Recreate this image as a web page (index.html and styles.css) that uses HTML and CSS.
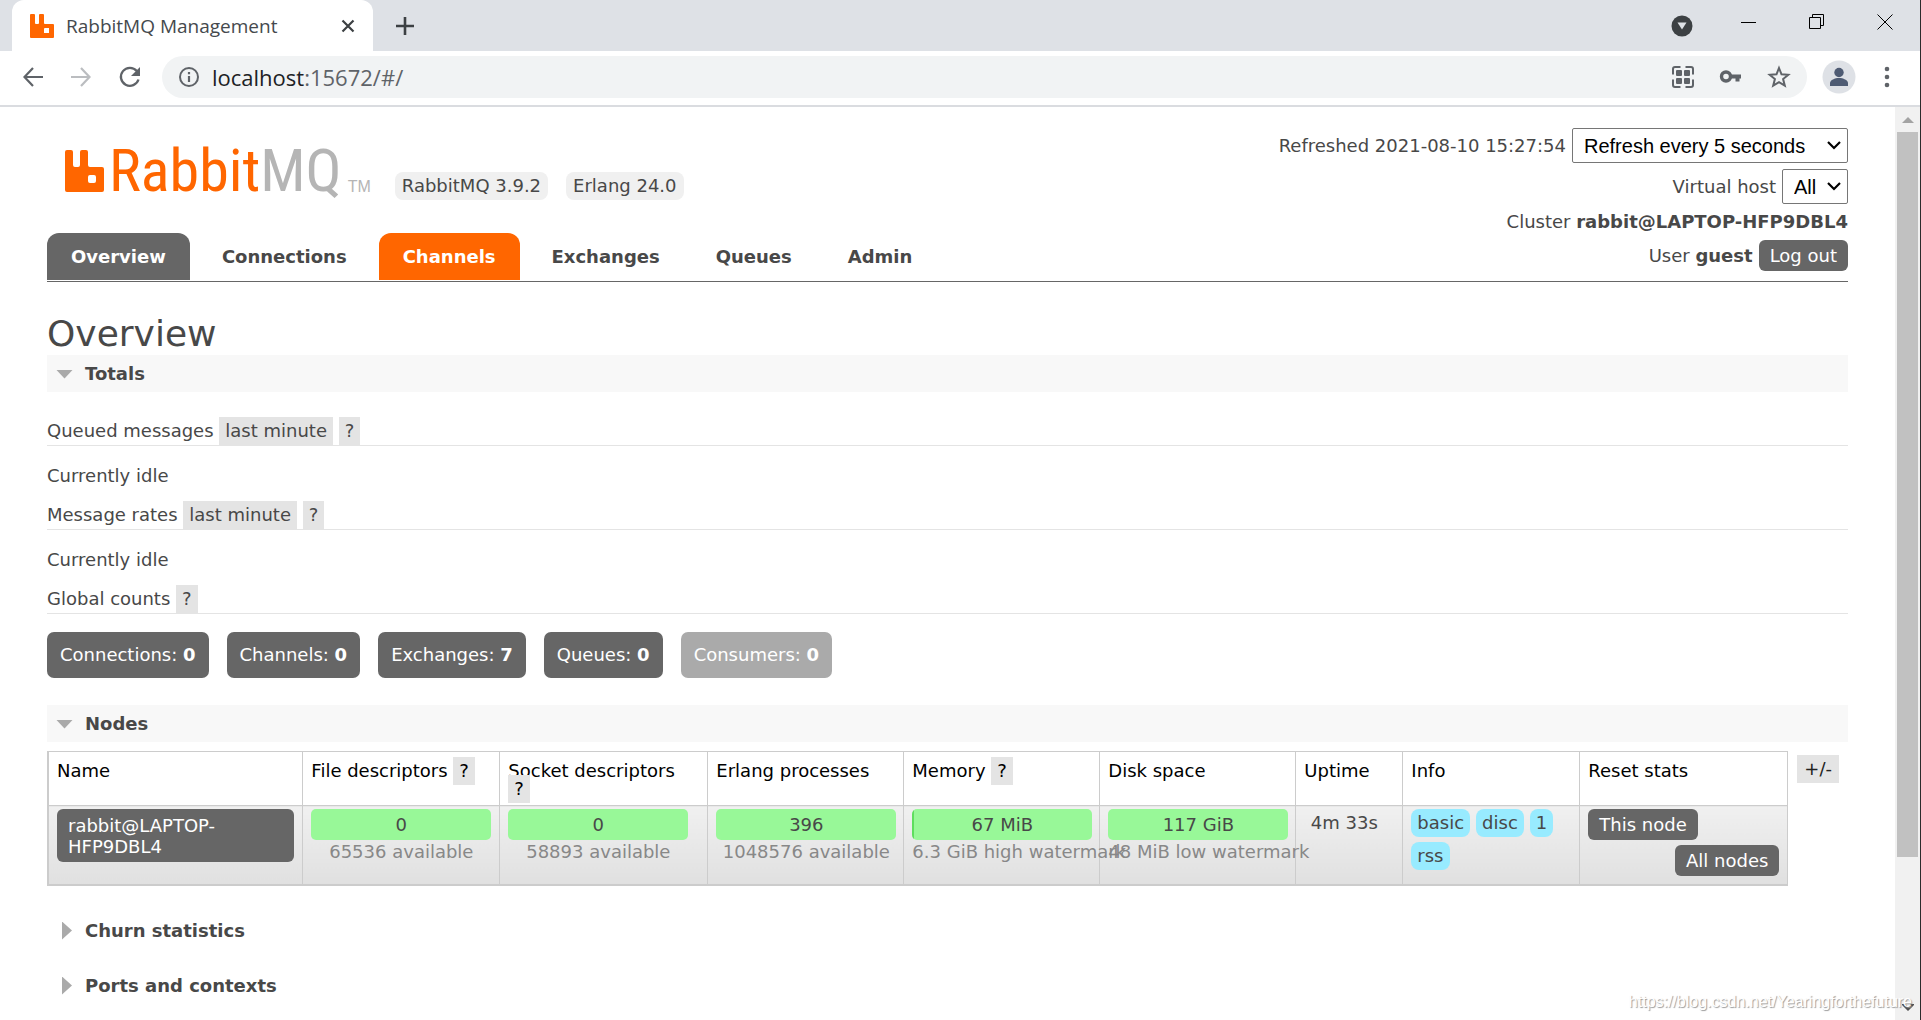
FILE: index.html
```html
<!DOCTYPE html>
<html lang="en">
<head>
<meta charset="utf-8">
<title>RabbitMQ Management</title>
<link rel="stylesheet" href="styles.css">
</head>
<body>
<div class="window">
  <div class="tabstrip">
    <div class="browser-tab">
      <svg class="favicon" width="24" height="24" viewBox="0 0 24 24"><path fill="#f60" fill-rule="evenodd" d="M1 0h3q1 0 1 1v8q0 1 1 1h2q1 0 1-1V1q0-1 1-1h3q1 0 1 1v8q0 1 1 1h8q1 0 1 1v12q0 1-1 1H1q-1 0-1-1V1q0-1 1-1zM14 15v4h5v-5h-4q-1 0-1 1z"/></svg>
      <span class="browser-title">RabbitMQ Management</span>
      <button class="icon-button" aria-label="Close tab"><svg width="14" height="14" viewBox="0 0 14 14"><path d="M1.500 1.500l11 11M12.500 1.500l-11 11" stroke="#3c4043" stroke-width="2.200"/></svg></button>
    </div>
    <button class="icon-button new-tab" aria-label="New tab"><svg width="20" height="20" viewBox="0 0 20 20"><path d="M10 1v18M1 10h18" stroke="#3c4043" stroke-width="2.600"/></svg></button>
    <div class="window-controls">
      <button class="icon-button tab-search" aria-label="Search tabs"><svg width="22" height="22" viewBox="0 0 22 22"><circle cx="11" cy="11" r="10.500" fill="#3c4043"/><path d="M6.500 7.500h9l-4.500 7z" fill="#dee1e6"/></svg></button>
      <button class="icon-button" aria-label="Minimize"><svg width="16" height="16" viewBox="0 0 16 16"><path d="M0 8.500h15" stroke="#000"/></svg></button>
      <button class="icon-button" aria-label="Restore"><svg width="16" height="16" viewBox="0 0 16 16"><path d="M.5 3.500h11v11H.5zM3.500 3V.5h11v11H12" fill="none" stroke="#000"/></svg></button>
      <button class="icon-button" aria-label="Close"><svg width="16" height="16" viewBox="0 0 16 16"><path d="M.5.5l15 15M15.500.5l-15 15" stroke="#000"/></svg></button>
    </div>
  </div>
  <div class="toolbar">
    <button class="icon-button" aria-label="Back"><svg width="20" height="20" viewBox="0 0 20 20"><path d="M20 10H2M10 1L1.500 10l8.500 9" fill="none" stroke="#5f6368" stroke-width="2.200"/></svg></button>
    <button class="icon-button" aria-label="Forward"><svg width="20" height="20" viewBox="0 0 20 20"><path d="M0 10h18M10 1l8.500 9-8.500 9" fill="none" stroke="#bbbdc0" stroke-width="2.200"/></svg></button>
    <button class="icon-button" aria-label="Reload"><svg width="22" height="22" viewBox="0 0 22 22"><path d="M17.800 5A9 9 0 1 0 19.500 13.500" fill="none" stroke="#5f6368" stroke-width="2.300"/><path d="M21 1v9h-9z" fill="#5f6368"/></svg></button>
    <div class="omnibox">
      <svg width="22" height="22" viewBox="0 0 22 22"><circle cx="11" cy="11" r="9" fill="none" stroke="#5f6368" stroke-width="2"/><path d="M11 10v6M11 6v2.200" stroke="#5f6368" stroke-width="2.200"/></svg>
      <span class="url">localhost<span class="url-rest">:15672/#/</span></span>
      <svg width="24" height="24" viewBox="0 0 24 24" fill="none" stroke="#5f6368" stroke-width="2"><path d="M9.500 2H4a2 2 0 0 0-2 2v5.500M14.500 2H20a2 2 0 0 1 2 2v5.500M9.500 22H4a2 2 0 0 1-2-2v-5.500M14.500 22H20a2 2 0 0 0 2-2v-5.500"/><g fill="#5f6368" stroke="none"><rect x="5" y="5" width="6" height="6" rx="1"/><rect x="13" y="5" width="6" height="6" rx="1"/><rect x="5" y="13" width="6" height="6" rx="1"/><rect x="13" y="13" width="6" height="6" rx="1"/></g></svg>
      <svg width="24" height="24" viewBox="0 0 24 24"><circle cx="7" cy="11.500" r="4.500" fill="none" stroke="#5f6368" stroke-width="3.400"/><path d="M11 9.500h11v4h-1.500v3h-4v-3H11z" fill="#5f6368"/></svg>
      <svg width="24" height="24" viewBox="0 0 24 24"><path d="M12 3l2.500 6.300 6.800.5-5.200 4.300 1.700 6.600-5.800-3.600-5.800 3.600 1.700-6.600L2.700 9.800l6.800-.5z" fill="none" stroke="#5f6368" stroke-width="2"/></svg>
    </div>
    <svg class="avatar" width="34" height="34" viewBox="0 0 34 34"><circle cx="17" cy="17" r="16.500" fill="#dee1e6"/><circle cx="17" cy="12.500" r="4.700" fill="#4e5b73"/><path d="M8 26v-3c0-3 5-5 9-5s9 2 9 5v3z" fill="#4e5b73"/></svg>
    <svg width="6" height="22" viewBox="0 0 6 22" fill="#5f6368"><circle cx="3" cy="3" r="2.300"/><circle cx="3" cy="11" r="2.300"/><circle cx="3" cy="19" r="2.300"/></svg>
  </div>
  <div class="viewport">
    <div class="page">
      <header class="masthead">
        <div class="brand-side">
          <div class="brand">
            <a class="logo" href="#" aria-label="RabbitMQ">
              <svg width="40" height="42" viewBox="0 0 40 42"><path fill="#f60" fill-rule="evenodd" d="M2 0h4q2 0 2 2v13q0 2 2 2h3q2 0 2-2V2q0-2 2-2h4q2 0 2 2v13q0 2 2 2h12q2 0 2 2v21q0 2-2 2H2q-2 0-2-2V2q0-2 2-2zM25 25q-2 0-2 2v4q0 2 2 2h4q2 0 2-2v-4q0-2-2-2z"/></svg>
              <span class="wordmark">Rabbit<span class="wordmark-mq">MQ</span></span><span class="trademark">TM</span>
            </a>
            <span class="version">RabbitMQ 3.9.2</span>
            <span class="version">Erlang 24.0</span>
          </div>
          <nav class="tabs">
            <a class="tab selected" href="#">Overview</a>
            <a class="tab" href="#">Connections</a>
            <a class="tab hovered" href="#">Channels</a>
            <a class="tab" href="#">Exchanges</a>
            <a class="tab" href="#">Queues</a>
            <a class="tab" href="#">Admin</a>
          </nav>
        </div>
        <div class="status">
          <div class="status-row"><label for="refresh">Refreshed 2021-08-10 15:27:54</label> <select id="refresh"><option selected>Refresh every 5 seconds</option><option>Refresh every 10 seconds</option><option>Refresh every 30 seconds</option></select></div>
          <div class="status-row"><label for="vhost">Virtual host</label> <select id="vhost"><option selected>All</option><option>/</option></select></div>
          <div class="status-row"><span>Cluster <b>rabbit@LAPTOP-HFP9DBL4</b></span></div>
          <div class="status-row"><span>User <b>guest</b></span> <button class="dark-button">Log out</button></div>
        </div>
      </header>
      <main>
        <h1>Overview</h1>
        <section>
          <h2 class="bar open">Totals</h2>
          <div class="totals">
            <h3>Queued messages <a class="chip" href="#">last minute</a> <a class="chip" href="#">?</a></h3>
            <p>Currently idle</p>
            <h3>Message rates <a class="chip" href="#">last minute</a> <a class="chip" href="#">?</a></h3>
            <p>Currently idle</p>
            <h3>Global counts <a class="chip" href="#">?</a></h3>
            <div class="counts">
              <a class="count" href="#">Connections: <b>0</b></a>
              <a class="count" href="#">Channels: <b>0</b></a>
              <a class="count" href="#">Exchanges: <b>7</b></a>
              <a class="count" href="#">Queues: <b>0</b></a>
              <span class="count disabled">Consumers: <b>0</b></span>
            </div>
          </div>
        </section>
        <section class="nodes">
          <h2 class="bar open">Nodes</h2>
          <div class="table-wrap">
            <table>
              <colgroup><col><col class="c-file"><col class="c-socket"><col class="c-meter"><col class="c-meter"><col class="c-meter"><col class="c-uptime"><col class="c-info"><col class="c-reset"></colgroup>
              <thead>
                <tr><th>Name</th><th>File descriptors <a class="chip" href="#">?</a></th><th>Socket descriptors <a class="chip" href="#">?</a></th><th>Erlang processes</th><th>Memory <a class="chip" href="#">?</a></th><th>Disk space</th><th>Uptime</th><th>Info</th><th>Reset stats</th></tr>
              </thead>
              <tbody>
                <tr>
                  <td><a class="node-link" href="#">rabbit@LAPTOP-HFP9DBL4</a></td>
                  <td><div class="meter">0</div><div class="limit">65536 available</div></td>
                  <td><div class="meter">0</div><div class="limit">58893 available</div></td>
                  <td><div class="meter">396</div><div class="limit">1048576 available</div></td>
                  <td><div class="meter used">67 MiB</div><div class="limit">6.3 GiB high watermark</div></td>
                  <td><div class="meter">117 GiB</div><div class="limit">48 MiB low watermark</div></td>
                  <td class="uptime">4m 33s</td>
                  <td><div class="badges"><span>basic</span><span>disc</span><span>1</span><span>rss</span></div></td>
                  <td><div class="resets"><button class="dark-button">This node</button><button class="dark-button all">All nodes</button></div></td>
                </tr>
              </tbody>
            </table>
            <a class="chip columns" href="#">+/-</a>
          </div>
        </section>
        <section class="folded"><h2 class="bar">Churn statistics</h2></section>
        <section class="folded"><h2 class="bar">Ports and contexts</h2></section>
      </main>
    </div>
    <div class="scrollbar">
      <svg width="12" height="6" viewBox="0 0 12 6"><path d="M0 6l6-6 6 6z" fill="#a3a3a3"/></svg>
      <div class="thumb"></div>
      <svg width="12" height="8" viewBox="0 0 12 8"><path d="M0 0h3l3 3 3-3h3v1L6 7 0 1z" fill="#505050"/></svg>
    </div>
  </div>
  <div class="watermark">https://blog.csdn.net/Yearingforthefuture</div>
</div>
</body>
</html>
```
FILE: styles.css
```css
* { box-sizing: border-box; }

body {
  margin: 0;
  background: #fff;
  color: #484848;
  font: 18px/24px "DejaVu Sans", Verdana, sans-serif;
}

a { color: inherit; text-decoration: none; }
svg { display: block; flex: none; }
h1, h2, h3, p { margin: 0; font-weight: normal; }
button { font: inherit; cursor: pointer; }

.window {
  position: relative;
  display: flex;
  flex-direction: column;
  min-height: 100vh;
  border-right: 1px solid #2b2b2b;
}

/* Browser frame */
.icon-button { padding: 0; border: 0; background: none; }

.tabstrip {
  display: flex;
  align-items: center;
  height: 51px;
  padding-left: 12px;
  background: #dee1e6;
}

.browser-tab {
  display: flex;
  align-items: center;
  width: 361px;
  height: 51px;
  padding: 0 18px;
  border-radius: 12px 12px 0 0;
  background: #fff;
}

.browser-title {
  flex: 1;
  padding-left: 12px;
  color: #45494d;
  font: 19px/24px "Open Sans", "Noto Sans", sans-serif;
}

.new-tab { margin-left: 22px; }

.window-controls {
  display: flex;
  align-items: center;
  gap: 52px;
  margin-left: auto;
  padding: 0 27px 8px 0;
}

.tab-search { margin: 8px -4px 0 0; }

.toolbar {
  display: flex;
  align-items: center;
  height: 56px;
  padding: 0 30px 2px 23px;
  gap: 28px;
  border-bottom: 2px solid #dadce0;
}

.omnibox {
  display: flex;
  align-items: center;
  flex: 1;
  gap: 24px;
  height: 42px;
  margin-left: -7px;
  padding: 0 16px;
  border-radius: 21px;
  background: #f1f3f4;
}

.url {
  flex: 1;
  margin-left: -12px;
  color: #202124;
  font: 22px/28px "Open Sans", "Noto Sans", sans-serif;
}

.url-rest { color: #5f6368; }
.avatar { margin: 0 0 0 -13px; }

.viewport { display: flex; flex: 1; }

.page { flex: 1; min-width: 0; padding: 0 47px; }

.scrollbar {
  display: flex;
  flex-direction: column;
  align-items: center;
  width: 25px;
  padding: 10px 0 8px;
  background: #f1f1f1;
}

.thumb { flex: none; width: 21px; height: 81%; margin: 9px 0 auto; background: #c1c1c1; }

/* Header */
.masthead {
  display: flex;
  justify-content: space-between;
  border-bottom: 1px solid #666;
}

.brand-side {
  display: flex;
  flex-direction: column;
  justify-content: space-between;
  padding: 33px 0 1px;
}

.brand { display: flex; align-items: flex-end; gap: 18px; }

.logo { display: flex; align-items: flex-end; padding: 10px 6px 8px 18px; }

.wordmark {
  height: 42px;
  padding-left: 4px;
  color: #f60;
  font: 60px/42px "Roboto Condensed", "Open Sans Condensed", Roboto, sans-serif;
}

.wordmark-mq { color: #b5b5b5; }

.trademark {
  padding-left: 6px;
  color: #b5b5b5;
  font: 16px/10px "Liberation Sans", sans-serif;
}

.version {
  padding: 2px 7px;
  border-radius: 8px;
  background: #f0f0f0;
}

.tabs { display: flex; gap: 8px; }

.tab {
  padding: 12px 24px 11px;
  border-radius: 12px 12px 0 0;
  font-weight: bold;
}

.tab.selected { background: #666; color: #fff; }
.tab.hovered { background: #f60; color: #fff; }

.status {
  display: flex;
  flex-direction: column;
  align-items: flex-end;
  gap: 6px;
  padding: 21px 0 10px;
}

.status-row { display: flex; align-items: center; gap: 6px; }

select {
  height: 35px;
  padding: 0 30px 0 11px;
  border: 1px solid #767676;
  border-radius: 2px;
  appearance: none;
  background: #fff url("data:image/svg+xml,%3Csvg xmlns='http://www.w3.org/2000/svg' width='14' height='9'%3E%3Cpath d='M1 1l6 6 6-6' fill='none' stroke='black' stroke-width='2.200'/%3E%3C/svg%3E") no-repeat right 6px center;
  color: #000;
  font: 20px "Liberation Sans", Arial, sans-serif;
}

.dark-button {
  height: 31px;
  padding: 0 11px;
  border: 0;
  border-radius: 6px;
  background: #666;
  color: #fff;
}

/* Content */
h1 { padding-top: 31px; font-size: 36px; line-height: 42px; }

.bar {
  display: flex;
  align-items: center;
  gap: 12px;
  padding: 7px 9px 6px;
  font-size: 18px;
  font-weight: bold;
}

.bar::before {
  content: "";
  width: 10px;
  height: 18px;
  margin: 0 1px 0 6px;
  background: #aaa;
  clip-path: polygon(0 0, 100% 50%, 0 100%);
}

.bar.open { background: #f8f8f8; }

.bar.open::before {
  width: 17px;
  height: 9px;
  margin: 0;
  clip-path: polygon(0 0, 100% 0, 50% 100%);
}

.totals { padding: 25px 0 27px; }

h3 {
  border-bottom: 1px solid #e4e4e4;
  font-size: 18px;
  line-height: 28px;
}

.totals p { padding: 18px 0 13px; }

.chip { padding: 3px 6px 4px; background: #e4e4e4; }

.counts { display: flex; flex-wrap: wrap; gap: 18px; padding-top: 18px; }

.count {
  padding: 11px 13px;
  border-radius: 7px;
  background: #666;
  color: #fff;
}

.count.disabled { background: #aaa; }

.table-wrap {
  display: flex;
  align-items: flex-start;
  gap: 9px;
  padding: 9px 9px 0 0;
}

table {
  flex: 1;
  width: 0;
  border-collapse: collapse;
  table-layout: fixed;
  border: 1px solid #ccc;
  border-width: 1px 1px 2px 2px;
}

.c-file { width: 197px; }
.c-socket { width: 208px; }
.c-meter { width: 196px; }
.c-uptime { width: 107px; }
.c-info { width: 177px; }
.c-reset { width: 208px; }

th, td { border: 1px solid #ccc; vertical-align: top; }

th {
  height: 54px;
  padding: 10px 8px 7px;
  color: #000;
  font-weight: normal;
  line-height: 18px;
  text-align: left;
}

td {
  height: 79px;
  padding: 3px 8px;
  background: linear-gradient(#f0f0f0, #e0e0e0);
}

.node-link {
  display: block;
  padding: 6px 11px 5px;
  border-radius: 6px;
  background: #666;
  color: #fff;
  line-height: 21px;
}

.meter {
  width: 180px;
  border-radius: 5px;
  background: #98f898;
  line-height: 31px;
  text-align: center;
}

.meter.used { background: linear-gradient(to right, #5ede5e 1%, #98f898 1%); }

.limit {
  width: 180px;
  color: #888;
  text-align: center;
  white-space: nowrap;
}

.uptime { padding-right: 18px; text-align: center; line-height: 28px; }

.badges { display: flex; flex-wrap: wrap; gap: 5px 6px; }

.badges span {
  padding: 0 6px;
  border-radius: 8px;
  background: #98ebff;
  line-height: 28px;
}

.resets { display: flex; flex-direction: column; align-items: flex-start; gap: 5px; }
.resets .all { align-self: flex-end; }

.columns { margin-top: 4px; padding: 2px 7px; color: #222; }

.folded { padding-top: 18px; }
.nodes { padding-bottom: 8px; }

.watermark {
  position: absolute;
  right: 8px;
  bottom: 8px;
  color: #fff;
  font: 16px/20px "Liberation Sans", Arial, sans-serif;
  text-shadow: 1px 1px 1px #999;
}
```
